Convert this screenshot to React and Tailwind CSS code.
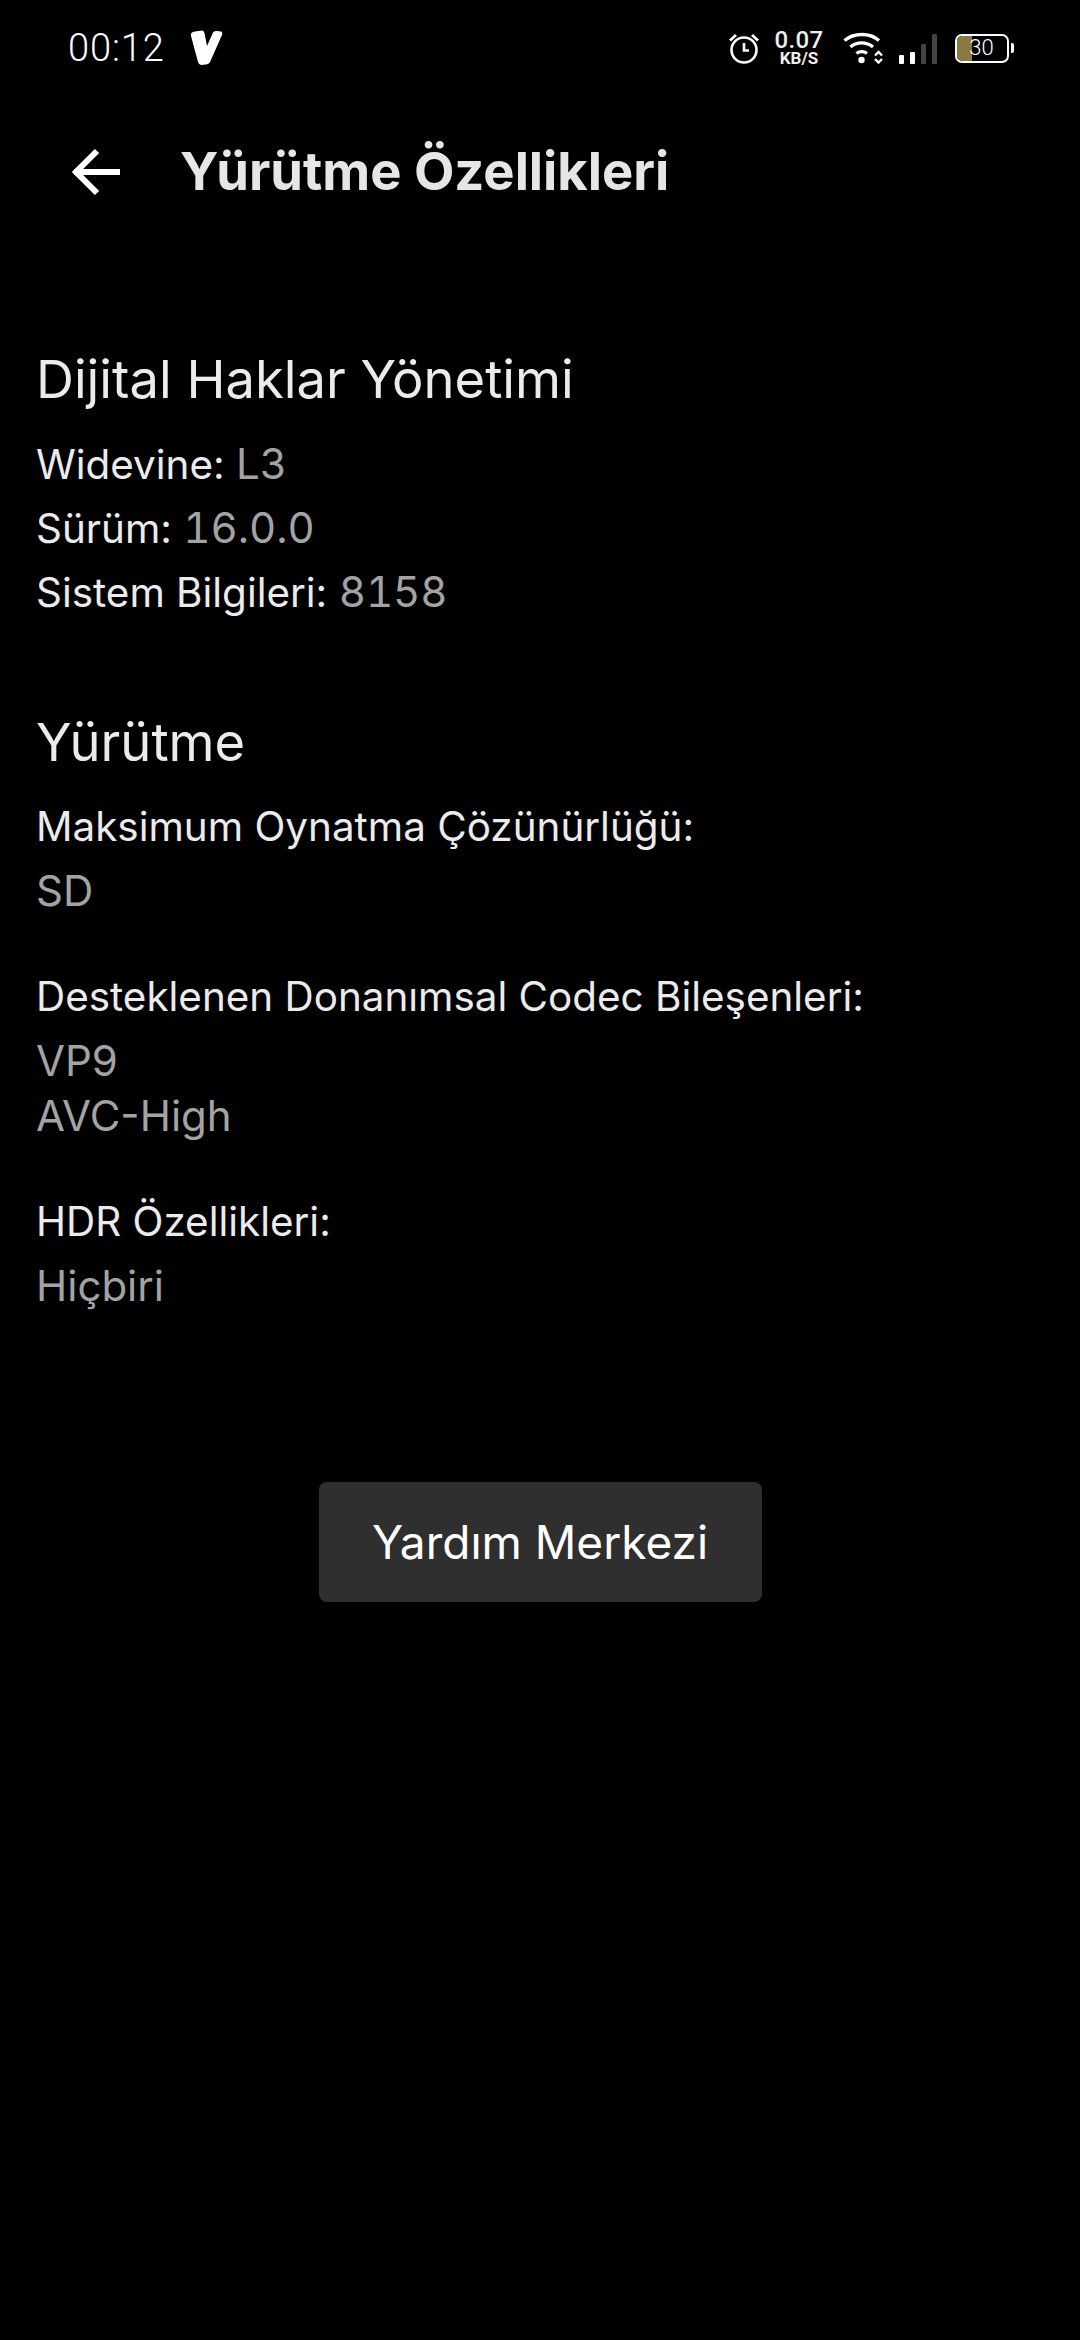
const font = "font-['Inter',sans-serif]";

const StatusBar = () => (
  <div className="flex h-[96px] items-center pl-[68px] pr-[66px] text-white">
    <span className="font-['Roboto',sans-serif] text-[38px] font-light leading-none tracking-[0.9px]">00:12</span>
    <svg className="ml-[25px]" width="34" height="36" viewBox="0 0 34 36">
      <path d="M1 6 Q0 2 5 1.500 L12 0.500 Q14 0.500 14.500 3 L17 16 L23 2.500 Q24 0.500 27 1 L31 1.500 Q33 2 32 5 L20 32 Q19 34 16 34.500 L11 35 Q9 35 8 32 Z" fill="#fff" />
    </svg>
    <div className="ml-auto flex items-center">
      <svg width="32" height="32" viewBox="0 0 32 32" fill="none" stroke="#fff">
        <circle cx="16" cy="18" r="12.500" strokeWidth="2.600" />
        <path d="M16 11v7.500h5" strokeWidth="2.600" />
        <path d="M2 8.500 8 3M30 8.500 24 3" strokeWidth="2.800" />
      </svg>
      <div className="ml-[13px] flex w-[52px] flex-col items-center font-['Roboto',sans-serif] text-[#eee]">
        <span className="text-[24px] font-medium leading-[20px] tracking-[0.4px]">0.07</span>
        <span className="text-[17px] font-bold leading-[16px]">KB/S</span>
      </div>
      <svg className="ml-[18px]" width="40" height="32" viewBox="0 0 40 32" fill="none" stroke="#fff" strokeWidth="3.400">
        <path d="M1.500 8.500C11 0.500 27 0.500 36 8.500" />
        <path d="M7.500 15C13.500 9.500 23.500 9.500 30 15" />
        <path d="M13.500 21.500C16.500 19 21 19 24 21.500" />
        <circle cx="18.500" cy="28" r="3.200" fill="#fff" stroke="none" />
        <path d="M32 23.500 35.500 20 39 23.500M32 27 35.500 30.500 39 27" strokeWidth="2.400" />
      </svg>
      <div className="ml-[16px] mt-[2px] flex h-[30px] items-end gap-[6px]">
        <span className="h-[9px] w-[5px] rounded-[1px] bg-white" />
        <span className="h-[12px] w-[5px] rounded-[1px] bg-white" />
        <span className="h-[20px] w-[5px] rounded-[1px] bg-[#444]" />
        <span className="h-[30px] w-[5px] rounded-[1px] bg-[#444]" />
      </div>
      <div className="ml-[18px] flex items-center gap-[2px]">
        <div className="relative flex h-[29px] w-[54px] items-center justify-center overflow-hidden rounded-[7px] border-[2.500px] border-white">
          <div className="absolute inset-y-0 left-0 w-[15px] bg-[#8a7a42]" />
          <span className="relative ml-[-1px] font-['Roboto',sans-serif] text-[22px] font-light leading-none text-white">30</span>
        </div>
        <div className="h-[10px] w-[3px] rounded-r-[2px] bg-white" />
      </div>
    </div>
  </div>
);

const Row = ({ label, value }) => (
  <p className="mt-[9px] first:mt-0">
    <span className="text-[#ebebeb]">{label}</span>{" "}
    <span className="text-[42px] leading-none tabular-nums text-[#a3a3a3]">{value}</span>
  </p>
);

const Spec = ({ label, values }) => (
  <div className="mt-[51px] first:mt-0">
    <p className="text-[#ebebeb]">{label}</p>
    <div className="mt-[9px] text-[42px] text-[#a3a3a3]">
      {values.map((value) => (
        <p key={value}>{value}</p>
      ))}
    </div>
  </div>
);

export default function App() {
  return (
    <main className={`${font} min-h-[2340px] w-[1080px] bg-black`}>
      <StatusBar />
      <header className="mt-[36px] flex h-[78px] items-center pl-[72px]">
        <svg className="mt-[2px]" width="48" height="48" viewBox="0 0 48 48" fill="none" stroke="#fff" strokeWidth="6">
          <path d="M2 24H48" />
          <path d="M25 3 4 24 25 45" />
        </svg>
        <h1 className="ml-[60px] text-[52.500px] font-bold leading-none text-[#e6e6e6]">Yürütme Özellikleri</h1>
      </header>

      <section className="mt-[137px] px-[36px] text-[40.400px] leading-[55px]">
        <h2 className="text-[52.500px] leading-[64px] text-[#ebebeb]">Dijital Haklar Yönetimi</h2>
        <div className="mt-[26px]">
          <Row label="Widevine:" value="L3" />
          <Row label="Sürüm:" value="16.0.0" />
          <Row label="Sistem Bilgileri:" value="8158" />
        </div>

        <h2 className="mt-[90px] text-[52.500px] leading-[64px] text-[#ebebeb]">Yürütme</h2>
        <div className="mt-[25px]">
          <Spec label="Maksimum Oynatma Çözünürlüğü:" values={["SD"]} />
          <Spec label="Desteklenen Donanımsal Codec Bileşenleri:" values={["VP9", "AVC-High"]} />
          <Spec label="HDR Özellikleri:" values={["Hiçbiri"]} />
        </div>
      </section>

      <div className="mt-[169px] flex justify-center">
        <button type="button" className="h-[120px] w-[443px] rounded-[8px] bg-[#2f2f2f] text-[46px] text-white">
          Yardım Merkezi
        </button>
      </div>
    </main>
  );
}
